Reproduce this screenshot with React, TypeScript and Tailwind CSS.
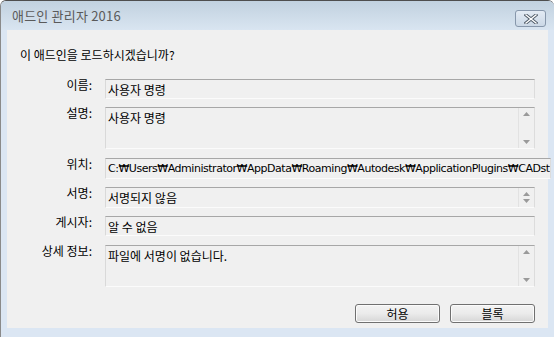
import React from "react";

const font = { fontFamily: '"Noto Sans CJK KR", "Noto Sans", sans-serif' };

function Spinner() {
  return (
    <div className="w-[16px] self-stretch border-l border-[#e2e2e2] flex flex-col justify-between items-center py-[4px]">
      <svg width="7" height="4" viewBox="0 0 7 4"><path d="M3.5 0 L7 4 L0 4 Z" fill="#9a9a9a" /></svg>
      <svg width="7" height="4" viewBox="0 0 7 4"><path d="M0 0 L7 0 L3.5 4 Z" fill="#9a9a9a" /></svg>
    </div>
  );
}

function Field({ text, h, spin, mono }: { text: string; h: number; spin?: boolean; mono?: boolean }) {
  return (
    <div
      className="flex border-t border-t-[#a7a7a7] border-l border-l-[#d9d9d9] border-r border-r-[#dcdcdc] border-b border-b-[#fbfbfb] bg-[#f0f0f0] overflow-hidden"
      style={{ height: h }}
    >
      <div className="flex-1 min-w-0 pl-[2px] pt-[2px] text-[12px] leading-[16px] text-black whitespace-nowrap overflow-hidden"
        style={mono ? { fontFamily: '"DejaVu Sans", sans-serif', fontSize: 11, letterSpacing: "-0.47px" } : font}>
        {text}
      </div>
      {spin ? <Spinner /> : null}
    </div>
  );
}

function Row({ label, children, mt }: { label: string; children: React.ReactNode; mt: number }) {
  return (
    <div className="flex" style={{ marginTop: mt }}>
      <div className="w-[85px] shrink-0 text-right text-[12px] leading-[14px] text-black -mt-[1px]" style={font}>
        {label}
      </div>
      <div className="flex-1 ml-[13px]">{children}</div>
    </div>
  );
}

function Btn({ label }: { label: string }) {
  return (
    <div className="w-[85px] h-[19px] rounded-[3px] border border-[#707070] bg-gradient-to-b from-[#f3f3f3] via-[#ebebeb] to-[#d6d6d6] flex items-center justify-center text-[12px] text-black shadow-[inset_0_0_0_1px_#fbfbfb]" style={font}>
      {label}
    </div>
  );
}

export default function App() {
  return (
    <div className="w-[554px] h-[337px] bg-[#dbe6f3] rounded-tl-[6px] rounded-tr-[6px] border-t border-t-[#4e4e4e] border-l border-l-[#8a8a8a] flex flex-col overflow-hidden">
      <div className="h-[29px] shrink-0 bg-gradient-to-b from-[#c1d1df] to-[#d9e5f1] flex items-center justify-between pl-[11px] pr-[8px]">
        <div className="text-[13px] text-[#5a5a5a] tracking-[0.2px]" style={font}>애드인 관리자 2016</div>
        <div className="self-start mt-[9px] w-[31px] h-[17px] rounded-[3px] border border-[#8797ab] bg-gradient-to-b from-[#e3ebf4] to-[#cbd8e6] flex items-center justify-center">
          <svg width="14" height="10" viewBox="0 0 14 10">
            <path d="M2 1 L12 9 M12 1 L2 9" stroke="#4f5b68" strokeWidth="3.2" strokeLinecap="square" />
            <path d="M2 1 L12 9 M12 1 L2 9" stroke="#ffffff" strokeWidth="1.4" strokeLinecap="square" />
          </svg>
        </div>
      </div>
      <div className="ml-[6px] mr-[6px] h-[298px] bg-[#f0f0f0] flex flex-col pr-[13px]">
        <div className="pl-[13px] pt-[18px] text-[12px] leading-[14px] text-black" style={font}>이 애드인을 로드하시겠습니까?</div>
        <Row label="이름:" mt={17}>
          <Field text="사용자 명령" h={20} />
        </Row>
        <Row label="설명:" mt={8}>
          <Field text="사용자 명령" h={42} spin />
        </Row>
        <Row label="위치:" mt={9}>
          <Field text="C:₩Users₩Administrator₩AppData₩Roaming₩Autodesk₩ApplicationPlugins₩CADst" h={21} mono />
        </Row>
        <Row label="서명:" mt={8}>
          <Field text=" 서명되지 않음" h={21} spin />
        </Row>
        <Row label="게시자:" mt={8}>
          <Field text="알 수 없음" h={20} />
        </Row>
        <Row label="상세 정보:" mt={9}>
          <Field text=" 파일에 서명이 없습니다." h={42} spin />
        </Row>
        <div className="flex justify-end gap-[10px] mt-[17px]">
          <Btn label="허용" />
          <Btn label="블록" />
        </div>
      </div>
    </div>
  );
}
